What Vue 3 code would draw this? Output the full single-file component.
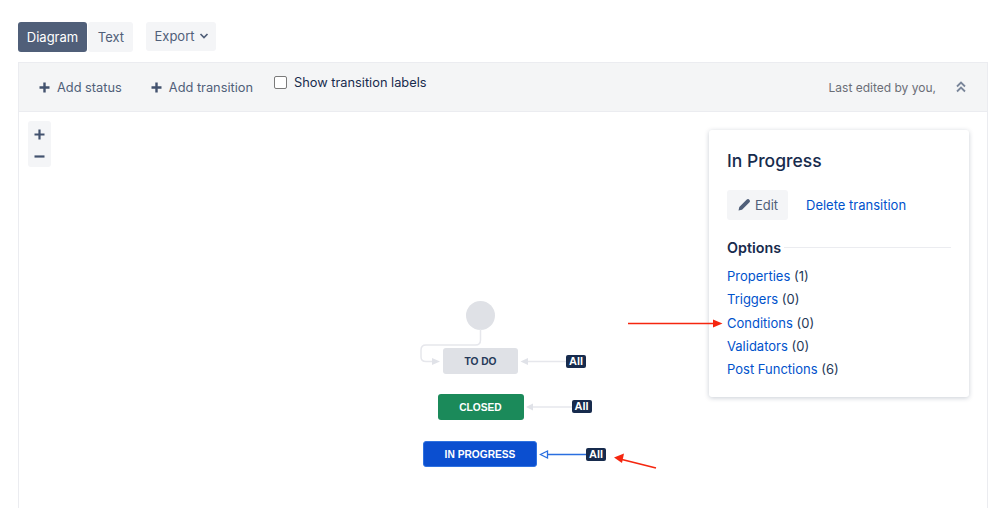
<script setup>
const options = [
  { name: 'Properties', count: 1 },
  { name: 'Triggers', count: 0 },
  { name: 'Conditions', count: 0 },
  { name: 'Validators', count: 0 },
  { name: 'Post Functions', count: 6 },
]
</script>

<template>
  <div class="page">
    <div class="tabs">
      <div class="group">
        <button class="btn active">Diagram</button>
        <button class="btn text-tab">Text</button>
      </div>
      <button class="btn export">
        Export
        <svg width="10" height="10" viewBox="0 0 10 10"><path d="M1.500 3 5 6.500 8.500 3" fill="none" stroke="#505f79" stroke-width="1.700" /></svg>
      </button>
    </div>
    <div class="panel">
      <div class="toolbar">
        <span class="tool first">
          <svg class="plus" width="11" height="11" viewBox="0 0 11 11"><path d="M5.500 0.500v10M0.500 5.500h10" stroke="#42526e" stroke-width="2.400" /></svg>
          Add status
        </span>
        <span class="tool second">
          <svg class="plus" width="11" height="11" viewBox="0 0 11 11"><path d="M5.500 0.500v10M0.500 5.500h10" stroke="#42526e" stroke-width="2.400" /></svg>
          Add transition
        </span>
        <label class="check"><input type="checkbox" />Show transition labels</label>
        <span class="edited">Last edited by you,</span>
        <svg class="collapse" width="12" height="14" viewBox="0 0 12 14"><path d="M2 6.500 6 2.500 10 6.500M2 11.500 6 7.500 10 11.500" fill="none" stroke="#7a869a" stroke-width="1.800" /></svg>
      </div>
      <div class="canvas">
        <div class="zoom">
          <svg width="11" height="11" viewBox="0 0 11 11"><path d="M5.500 0.500v10M0.500 5.500h10" stroke="#42526e" stroke-width="2.200" /></svg>
          <svg width="11" height="11" viewBox="0 0 11 11"><path d="M0.500 5.500h10" stroke="#42526e" stroke-width="2.200" /></svg>
        </div>

        <div class="start"></div>
        <div class="node todo">TO DO</div>
        <div class="node closed">CLOSED</div>
        <div class="node progress">IN PROGRESS</div>
        <span class="all all-1">All</span>
        <span class="all all-2">All</span>
        <span class="all all-3">All</span>

        <aside class="card">
          <h2>In Progress</h2>
          <div class="actions">
            <button class="btn edit">
              <svg width="13" height="13" viewBox="0 0 13 13"><path d="M0.500 12.500 1.300 9 8.800 1.500Q9.800 0.500 10.800 1.300L11.700 2.200Q12.500 3.200 11.500 4.200L4 11.700Z" fill="#505f79" /></svg>
              Edit
            </button>
            <a class="link delete">Delete transition</a>
          </div>
          <div class="options-head"><strong>Options</strong><span class="rule"></span></div>
          <ul>
            <li v-for="o in options" :key="o.name"><a class="link">{{ o.name }}</a> ({{ o.count }})</li>
          </ul>
        </aside>

        <svg class="edges" width="970" height="397" viewBox="18 111 970 397">
          <path d="M480.500 329V340Q480.500 345 475.500 345H426Q421 345 421 350V357Q421 361.500 426 361.500H432" fill="none" stroke="#e6e7ec" stroke-width="1.500" />
          <path d="M432 358 440 361.500 432 365Z" fill="#e0e2e8" />
          <path d="M528 361.500H566" stroke="#e6e7ec" stroke-width="1.500" />
          <path d="M528 358 520.500 361.500 528 365Z" fill="#e0e2e8" />
          <path d="M533 407H572" stroke="#e6e7ec" stroke-width="1.500" />
          <path d="M533 403.500 526 407 533 410.500Z" fill="#e0e2e8" />
          <path d="M547 454.500H586" stroke="#2a6fe0" stroke-width="1.300" />
          <path d="M547.500 451 540.500 454.500 547.500 458Z" fill="#fff" stroke="#2a6fe0" stroke-width="1.300" />
          <path d="M628 323.500H714" stroke="#f5260f" stroke-width="1.600" />
          <path d="M713 319.500 722.500 323.500 713 327.500Z" fill="#f5260f" />
          <path d="M656 468 622 459.500" stroke="#f5260f" stroke-width="1.800" />
          <path d="M614 457.500 624 453.500 622 463Z" fill="#f5260f" />
        </svg>
      </div>
    </div>
  </div>
</template>

<style>
html, body { margin: 0; background: #fff; overflow: hidden; }
</style>

<style scoped>
.page {
  box-sizing: border-box;
  height: 508px;
  overflow: hidden;
  padding: 22px 10px 0 18px;
  font-family: Inter, "Liberation Sans", sans-serif;
  font-size: 13px;
  color: #172b4d;
}
.tabs { display: flex; gap: 13px; align-items: flex-start; height: 40px; }
.group { display: flex; gap: 1px; }
.btn {
  display: flex;
  align-items: center;
  justify-content: center;
  box-sizing: border-box;
  height: 29px;
  border: 0;
  border-radius: 3px;
  background: #f4f5f7;
  color: #505f79;
  font: inherit;
  padding: 0 0 1px;
}
.active { width: 69px; height: 30px; background: #505f79; color: #fff; }
.text-tab { width: 45px; height: 30px; padding-left: 1px; }
.export { width: 70px; gap: 4px; padding-left: 1px; }
.export svg { flex-shrink: 0; }
.panel { border: 1px solid #ebecf0; border-bottom: 0; height: 446px; box-sizing: border-box; }
.toolbar {
  display: flex;
  align-items: center;
  box-sizing: border-box;
  height: 48px;
  background: #f4f5f6;
  box-shadow: 0 1px 0 #ebecf0;
  color: #505f79;
  font-size: 12.800px;
}
.tool { display: flex; align-items: center; gap: 7px; }
.first { margin-left: 20px; }
.second { margin-left: 29px; }
.check {
  display: flex;
  align-items: center;
  gap: 7px;
  margin-left: 21px;
  margin-bottom: 10px;
  color: #172b4d;
}
.check input {
  appearance: none;
  box-sizing: border-box;
  width: 13px;
  height: 13px;
  margin: 0;
  background: #fff;
  border: 1px solid #7a7a7a;
  border-radius: 2px;
}
.edited { margin-left: auto; font-size: 12px; color: #6b6e76; }
.collapse { margin: 0 20px 0 19px; }
.canvas { position: relative; height: 397px; }
.zoom {
  position: absolute;
  left: 9px;
  top: 10px;
  box-sizing: border-box;
  width: 23px;
  height: 46px;
  background: #f4f5f7;
  border-radius: 3px;
  display: flex;
  flex-direction: column;
  align-items: center;
  gap: 11px;
  padding: 8px 0 0;
}
.edges { position: absolute; left: -1px; top: 0; pointer-events: none; }
.start {
  position: absolute;
  left: 447px;
  top: 190px;
  width: 29px;
  height: 29px;
  border-radius: 50%;
  background: #dfe1e6;
}
.node {
  position: absolute;
  display: flex;
  align-items: center;
  justify-content: center;
  box-sizing: border-box;
  height: 26px;
  border-radius: 3px;
  font-family: "Liberation Sans", Arial, sans-serif;
  font-size: 10.200px;
  font-weight: 700;
  color: #fff;
}
.todo { left: 424px; top: 237px; width: 75px; background: #dfe1e6; color: #253858; }
.closed { left: 418.500px; top: 283px; width: 86px; background: #1b8a5a; }
.progress { left: 404px; top: 330px; width: 114px; background: #0b4fd0; border: 1px solid #2f72e0; }
.all {
  position: absolute;
  height: 13px;
  padding: 0 3px;
  line-height: 13px;
  border-radius: 2px;
  background: #172b4d;
  color: #fff;
  font-family: "Liberation Sans", Arial, sans-serif;
  font-size: 11px;
  font-weight: 700;
}
.all-1 { left: 547px; top: 244px; }
.all-2 { left: 552.500px; top: 289px; }
.all-3 { left: 567px; top: 337px; }
.card {
  position: absolute;
  left: 690px;
  top: 19px;
  box-sizing: border-box;
  width: 260px;
  height: 267px;
  padding: 20px 18px;
  background: #fff;
  border-radius: 3px;
  box-shadow: 0 1px 5px rgba(9, 30, 66, 0.22);
}
h2 { margin: 0; font-size: 17.500px; font-weight: 500; line-height: 22px; color: #172b4d; }
.actions { display: flex; align-items: center; gap: 18px; margin-top: 18px; }
.edit { width: 61px; height: 30px; gap: 4px; padding-left: 1px; }
.link { color: #0052cc; }
.options-head { display: flex; align-items: center; gap: 3px; margin-top: 17px; height: 20px; }
.options-head strong { font-size: 14.300px; font-weight: 600; }
.rule { flex: 1; height: 1px; background: #ebecf0; }
ul { list-style: none; margin: 8px 0 0; padding: 0; }
li { height: 23.250px; line-height: 23px; color: #253858; }
</style>
